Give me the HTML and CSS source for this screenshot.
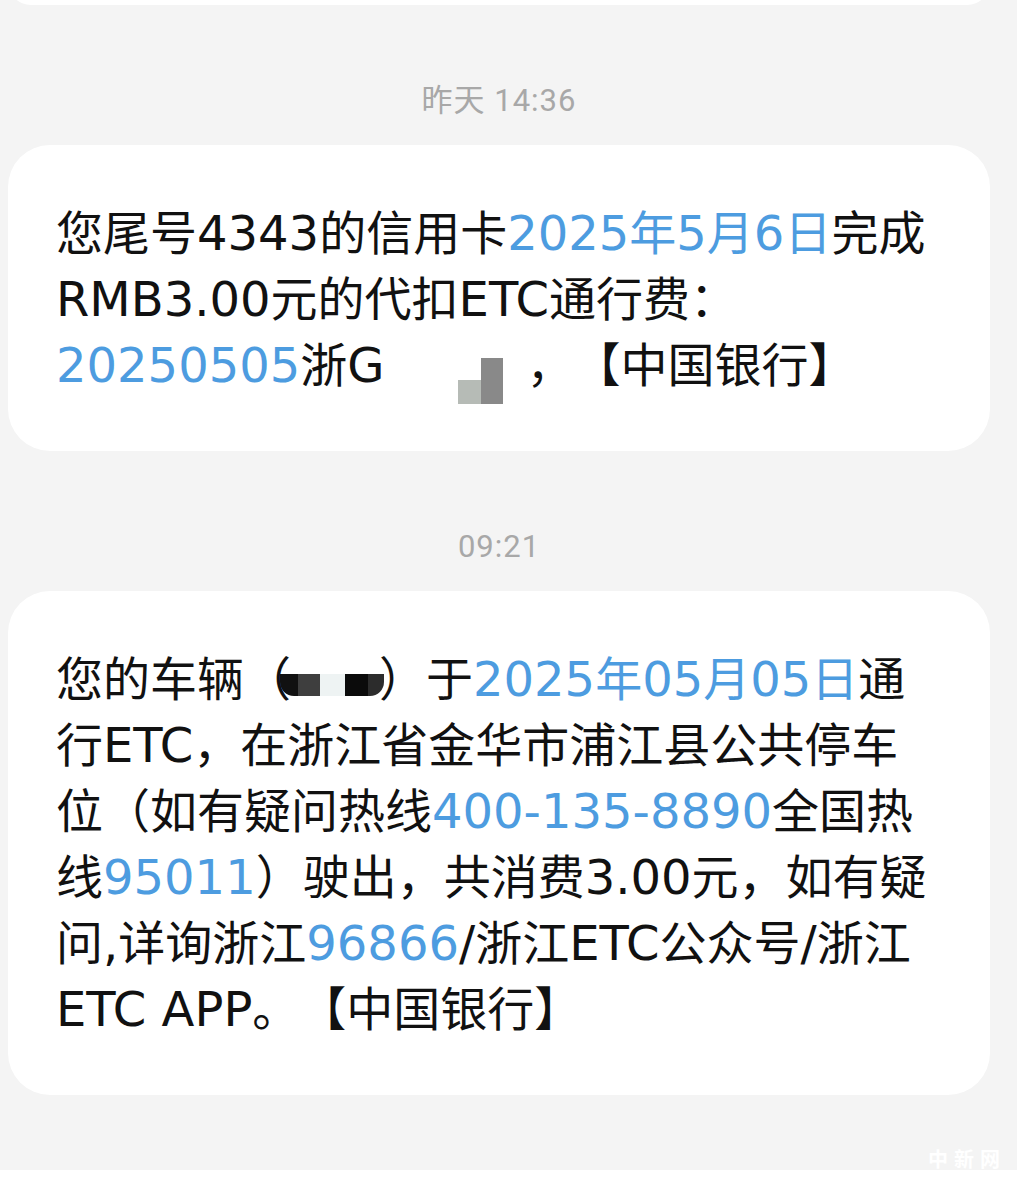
FILE: index.html
```html
<!DOCTYPE html>
<html lang="zh-CN">
<head>
    <meta charset="UTF-8">
    <meta name="viewport" content="width=device-width, initial-scale=1.0">
    <title>短信</title>
    <link rel="stylesheet" href="styles.css">
</head>
<body>
    <div class="thread">
        <div class="bubble bubble-cut"></div>

        <div class="time">昨天 14:36</div>
        <div class="bubble">
            <p class="msg">您尾号<span class="lat">4343</span>的信用卡<span class="link"><span class="lat">2025</span>年<span class="lat">5</span>月<span class="lat">6</span>日</span>完成<br><span class="lat">RMB3.00</span>元的代扣<span class="lat">ETC</span>通行费：<br><span class="link lat">20250505</span>浙<span class="lat">G</span><span class="mask mask-plate"><i class="px px-light"></i><i class="px px-dark"></i></span>，【中国银行】</p>
        </div>

        <div class="time">09:21</div>
        <div class="bubble">
            <p class="msg">您的车辆（<span class="mask mask-car"><i class="blot blot-a"></i><i class="blot blot-b"></i><i class="blot blot-gap"></i><i class="blot blot-c"></i><i class="blot blot-d"></i></span>）于<span class="link"><span class="lat">2025</span>年<span class="lat">05</span>月<span class="lat">05</span>日</span>通<br>行<span class="lat">ETC</span>，在浙江省金华市浦江县公共停车<br>位（如有疑问热线<span class="link lat">400-135-8890</span>全国热<br>线<span class="link lat">95011</span>）驶出，共消费<span class="lat">3.00</span>元，如有疑<br>问<span class="lat">,</span>详询浙江<span class="link lat">96866</span><span class="lat">/</span>浙江<span class="lat">ETC</span>公众号<span class="lat">/</span>浙江<br><span class="lat">ETC APP</span>。【中国银行】</p>
        </div>

        <div class="thread-end">
            <span class="watermark">中新网</span>
        </div>
    </div>
    <div class="bottom-strip"></div>
</body>
</html>
```

FILE: styles.css
```css
body {
    margin: 0;
    background-color: #f4f4f4;
    font-family: "DejaVu Sans", "Noto Sans CJK SC", sans-serif;
    color: #111;
}

.thread {
    padding: 0 27px 0 8px;
}

.bubble {
    background-color: #fff;
    border-radius: 42px;
    padding: 56px 40px 52px 48px;
}

/* the previous message, only its bottom edge is visible */
.bubble-cut {
    height: 46px;
    margin-top: -41px;
    padding: 0;
}

.time {
    margin: 76px 0 24px;
    height: 40px;
    line-height: 40px;
    text-align: center;
    font-family: Roboto, "Noto Sans CJK SC", sans-serif;
    font-size: 31px;
    letter-spacing: 1px;
    color: #a8a8a8;
}

.msg {
    margin: 0;
    font-size: 47px;
    line-height: 66px;
    white-space: nowrap;
    text-spacing-trim: space-all;
}

/* latin letters and digits run a little larger than the hanzi */
.lat {
    font-size: 48px;
    line-height: 1;
}

.link {
    color: #4d9ce0;
}

.mask {
    display: inline-flex;
    align-items: flex-end;
}

.mask-plate {
    width: 142px;
    height: 46px;
    padding-left: 73px;
    box-sizing: border-box;
    vertical-align: -22px;
    margin-bottom: -8px;
}

.px {
    display: block;
}

.px-light {
    width: 23px;
    height: 24px;
    background-color: #b6bbb6;
}

.px-dark {
    width: 22px;
    height: 46px;
    background-color: #898989;
}

.mask-car {
    width: 104px;
    height: 22px;
    margin: 0 -5px 0 -11px;
}

.blot {
    display: block;
    height: 22px;
}

.blot-a {
    width: 18px;
    background-color: #111;
    border-bottom-left-radius: 14px;
}

.blot-b {
    width: 22px;
    background-color: #3e3e3e;
}

.blot-gap {
    width: 25px;
    background-color: #eef3f3;
}

.blot-c {
    width: 23px;
    background-color: #0b0b0b;
}

.blot-d {
    width: 16px;
    background-color: #2c2c2c;
    border-bottom-right-radius: 14px;
}

.thread-end {
    height: 75px;
    display: flex;
    justify-content: flex-end;
    align-items: flex-end;
}

.watermark {
    margin-right: -16px;
    font-family: "Noto Sans CJK SC", sans-serif;
    font-size: 20px;
    font-weight: bold;
    line-height: 22px;
    letter-spacing: 6px;
    color: #fff;
}

.bottom-strip {
    height: 20px;
    background-color: #fff;
}
```
